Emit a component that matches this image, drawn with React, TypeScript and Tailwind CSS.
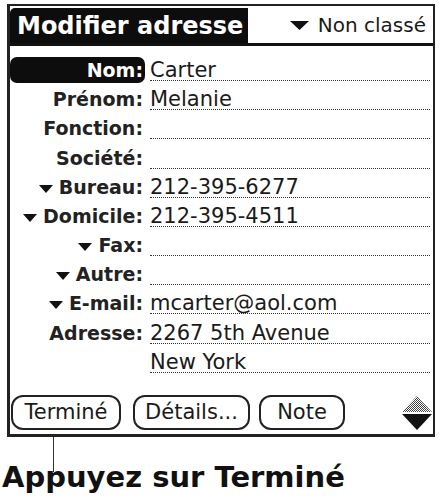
import React from "react";

type Row = {
  label: string;
  value?: string;
  arrow?: boolean;
  selected?: boolean;
};

const rows: Row[] = [
  { label: "Nom:", value: "Carter", selected: true },
  { label: "Prénom:", value: "Melanie" },
  { label: "Fonction:" },
  { label: "Société:" },
  { label: "Bureau:", value: "212-395-6277", arrow: true },
  { label: "Domicile:", value: "212-395-4511", arrow: true },
  { label: "Fax:", arrow: true },
  { label: "Autre:", arrow: true },
  { label: "E-mail:", value: "mcarter@aol.com", arrow: true },
  { label: "Adresse:", value: "2267 5th Avenue" },
  { label: "", value: "New York" },
];

const palm = { fontFamily: '"DejaVu Sans", "Noto Sans", sans-serif' };

function DownTri({ w = 14, h = 8, className = "" }: { w?: number; h?: number; className?: string }) {
  return (
    <svg width={w} height={h} viewBox={`0 0 ${w} ${h}`} className={className}>
      <polygon points={`0,0 ${w},0 ${w / 2},${h}`} fill="#111" />
    </svg>
  );
}

function Button({ label, width }: { label: string; width: string }) {
  return (
    <div
      className={`${width} h-[35px] border-2 border-[#222] rounded-[12px] flex items-center justify-center text-[21px] text-[#1a1a1a] leading-none`}
    >
      {label}
    </div>
  );
}

export default function App() {
  return (
    <div className="w-[440px] h-[498px] bg-white overflow-hidden" style={palm}>
      <div className="ml-[7px] mt-[4px] w-[428px] h-[433px] border-l-[3px] border-t-2 border-r-2 border-b-[3px] border-[#222] flex flex-col">
        {/* title bar */}
        <div className="flex h-[40px] border-b-[3px] border-[#111] shrink-0">
          <div className="mt-[2px] h-[35px] w-[238px] bg-[#0d0d0d] rounded-tl-[5px] flex items-end pb-[5px] pl-[7px] text-white font-bold text-[24px] leading-none whitespace-nowrap">
            Modifier adresse
          </div>
          <div className="flex-1 flex items-end justify-end pb-[8px] pr-[7px] text-[20px] leading-none text-[#1a1a1a]">
            <DownTri w={19} h={9} className="mr-[9px] mb-[5px]" />
            Non classé
          </div>
        </div>

        {/* fields */}
        <div className="pt-[5.8px]">
          {rows.map((r, i) => (
            <div key={i} className="flex items-end h-[29.2px]">
              <div
                className={`w-[135px] h-[26px] mb-[-2px] flex items-end justify-end pb-[3px] pr-[2px] rounded-[7px] font-bold text-[19px] leading-[20px] ${
                  r.selected ? "bg-[#0d0d0d] text-white" : "text-[#222]"
                }`}
              >
                {r.arrow && <DownTri className="mr-[6px] mb-[4px]" />}
                {r.label}
              </div>
              <div className="ml-[5px] mr-[3px] flex-1 h-[21px] border-b border-dotted border-[#333] text-[21px] leading-[20px] text-[#1a1a1a] whitespace-nowrap">
                {r.value}
              </div>
            </div>
          ))}
        </div>

        {/* buttons */}
        <div className="mt-auto flex items-center pb-[4px] pl-[1px] pr-[1px]">
          <Button label="Terminé" width="w-[110px]" />
          <div className="w-[12px]" />
          <Button label="Détails..." width="w-[117px]" />
          <div className="w-[9px]" />
          <Button label="Note" width="w-[86px]" />
          <div className="ml-auto flex flex-col items-center gap-[2px]">
            <svg width="30" height="16" viewBox="0 0 30 16">
              <defs>
                <pattern id="dither" width="2" height="2" patternUnits="userSpaceOnUse">
                  <rect width="2" height="2" fill="#fff" />
                  <rect width="1" height="1" fill="#444" />
                  <rect x="1" y="1" width="1" height="1" fill="#444" />
                </pattern>
              </defs>
              <polygon points="15,0 30,16 0,16" fill="url(#dither)" />
            </svg>
            <svg width="30" height="16" viewBox="0 0 30 16">
              <polygon points="0,0 30,0 15,16" fill="#111" />
            </svg>
          </div>
        </div>
      </div>

      {/* callout */}
      <div className="ml-[53px] w-px h-[35px] bg-[#333]" />
      <div className="-mt-[9.5px] pl-[2px] font-bold text-[29px] leading-[29px] text-[#111] whitespace-nowrap">
        Appuyez sur Terminé
      </div>
    </div>
  );
}
